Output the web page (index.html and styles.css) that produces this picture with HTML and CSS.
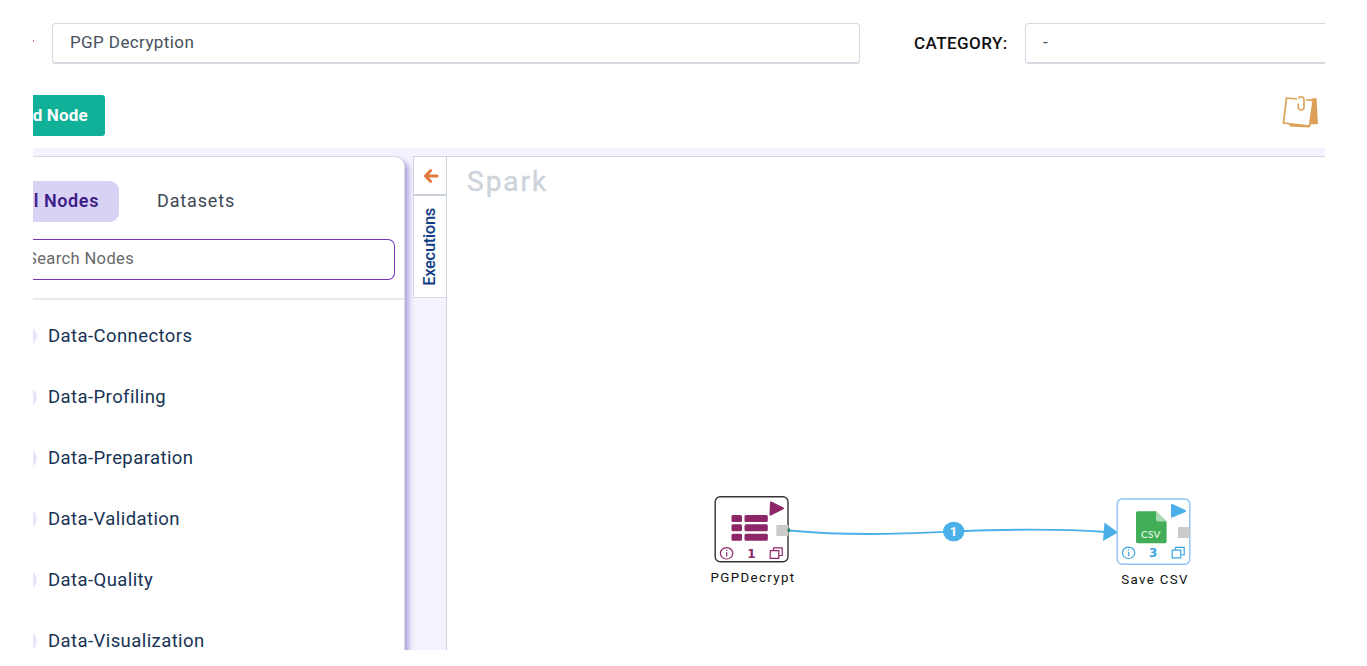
FILE: index.html
```html
<!DOCTYPE html>
<html lang="en">
<head>
<meta charset="utf-8">
<title>PGP Decryption</title>
<link rel="stylesheet" href="styles.css">
</head>
<body>
<div class="app">
  <header class="form-row">
    <span class="required"></span>
    <div class="field name-field">PGP Decryption</div>
    <span class="field-label">CATEGORY:</span>
    <div class="field category-field">-</div>
  </header>
  <div class="toolbar">
    <button class="add-node">d Node</button>
    <svg class="notes-icon" width="38" height="34" viewBox="0 0 38 34">
      <path d="M30.500 3.500L35.500 3L37 29L29.500 29.500ZM8.500 29L28 31L28.500 32.500L8.500 31.500Z" fill="#dda057"/>
      <path d="M5.500 3L32.300 5.500L28.500 31L2.500 28Z" fill="#fff" stroke="#dda057" stroke-width="1.700"/>
      <path d="M16 4.500H25" fill="none" stroke="#fff" stroke-width="4"/>
      <path d="M17.500 3.500Q18.500 1.500 21 2Q23 2.200 23 5V12Q23 15 20 15Q17.300 15 17.300 12V8.500" fill="none" stroke="#dda057" stroke-width="1.600"/>
    </svg>
  </div>
  <main class="workspace">
    <aside class="panel">
      <nav class="tabs">
        <span class="tab active">l Nodes</span>
        <span class="tab">Datasets</span>
      </nav>
      <div class="search"><span>Search Nodes</span></div>
      <ul class="groups">
        <li>Data-Connectors</li>
        <li>Data-Profiling</li>
        <li>Data-Preparation</li>
        <li>Data-Validation</li>
        <li>Data-Quality</li>
        <li>Data-Visualization</li>
      </ul>
    </aside>
    <div class="rail">
      <div class="collapse">
        <svg width="16" height="16" viewBox="0 0 16 16"><path d="M7.500 2.700L2.500 8L7.500 13.300M3 8H14" fill="none" stroke="#e07b3f" stroke-width="3" stroke-linecap="round" stroke-linejoin="round"/></svg>
      </div>
      <div class="executions"><span>Executions</span></div>
    </div>
    <section class="canvas">
      <h1>Spark</h1>
      <svg class="edges" width="878" height="493" viewBox="447 157 878 493">
        <path d="M789 530.500C850 536 895 534 954 531.500C1010 529 1055 528.500 1106 532" fill="none" stroke="#4bb0e8" stroke-width="1.900"/>
        <ellipse cx="953.700" cy="531.500" rx="10.700" ry="9.800" fill="#4bb0e8"/>
        <text x="953.500" y="536" class="edge-number">1</text>
        <path d="M1104.500 522.500L1118 532.500L1103 541Z" fill="#4bb0e8"/>
      </svg>
      <div class="node decrypt">
        <svg width="76" height="68" viewBox="714 496 76 68">
          <rect x="715.200" y="496.700" width="72.800" height="65" rx="5" fill="#fff" stroke="#3a3038" stroke-width="1.400"/>
          <g fill="#8d2767">
            <rect x="731.500" y="515" width="10.500" height="7" rx="1.500"/><rect x="744.500" y="515" width="23.300" height="7" rx="1.500"/>
            <rect x="731.500" y="524.300" width="10.500" height="7" rx="1.500"/><rect x="744.500" y="524.300" width="23.300" height="7" rx="1.500"/>
            <rect x="731.500" y="533.800" width="10.500" height="7" rx="1.500"/><rect x="744.500" y="533.800" width="23.300" height="7" rx="1.500"/>
            <path d="M771 502.500L783 508.300L770.500 514.500Z" stroke="#8d2767" stroke-width="2" stroke-linejoin="round"/>
          </g>
          <rect x="776.300" y="525" width="12" height="11" fill="#cbcbcb"/>
          <circle cx="789.400" cy="530.200" r="2" fill="#24856b"/>
          <g fill="none" stroke="#8d2767" stroke-width="1.200">
            <ellipse cx="726.600" cy="553.300" rx="6.200" ry="5.700"/><path d="M726.700 552.300V556.500M726.700 549.800V551.100"/>
            <path d="M773.500 550.500V547.900H782.200V555.500H779M770.200 550.600H778.800V558.400H770.200Z"/>
          </g>
          <text x="751.500" y="557.900" class="count plum">1</text>
        </svg>
        <span class="node-label">PGPDecrypt</span>
      </div>
      <div class="node csv">
        <svg width="76" height="68" viewBox="1116 498 76 68">
          <rect x="1117.200" y="499" width="72.600" height="65.300" rx="5" fill="#fff" stroke="#8fc2f5" stroke-width="1.400"/>
          <path d="M1137.500 511.300H1156L1166.600 521.500V541.500Q1166.600 543.200 1165 543.200H1137.500Q1136 543.200 1136 541.500V513Q1136 511.300 1137.500 511.300Z" fill="#42ae58"/>
          <path d="M1156 511.300L1166.600 521.500H1158Q1156 521.500 1156 519.500Z" fill="#a9dab2"/>
          <text x="1150.900" y="538.300" class="csv-text">CSV</text>
          <path d="M1172 505L1185 511L1172 516.500Z" fill="#4bb0e8" stroke="#4bb0e8" stroke-width="2" stroke-linejoin="round"/>
          <rect x="1178" y="527" width="11.700" height="11" fill="#cbcbcb"/>
          <g fill="none" stroke="#3aa5e0" stroke-width="1.200">
            <ellipse cx="1128.600" cy="552.800" rx="6.200" ry="5.700"/><path d="M1128.700 551.800V556M1128.700 549.300V550.600"/>
            <path d="M1175.500 550V547.400H1184.200V555H1181M1172.200 550.100H1180.800V557.900H1172.200Z"/>
          </g>
          <text x="1153.300" y="557.300" class="count blue">3</text>
        </svg>
        <span class="node-label">Save CSV</span>
      </div>
    </section>
  </main>
</div>
</body>
</html>
```
FILE: styles.css
```css
* { box-sizing: border-box; }
body { margin: 0; background: #fff; font-family: Roboto, "Liberation Sans", sans-serif; }
.app { width: 1292px; height: 650px; margin-left: 33px; overflow: hidden; display: flex; flex-direction: column; }
.form-row { display: flex; align-items: center; flex: none; padding-top: 23px; height: 64px; }
.required { flex: none; width: 1px; height: 2px; margin: 0 18px 6px 0; background: #e87878; }
.field { flex: none; height: 41px; border: 1px solid #d5dae1; border-bottom-width: 2px; border-radius: 4px; padding-left: 17px; font-size: 17px; letter-spacing: .4px; line-height: 37px; color: #45505e; }
.name-field { width: 808px; }
.field-label { flex: none; width: 111px; margin-left: 54px; padding-bottom: 2px; font-size: 17px; letter-spacing: .45px; font-weight: 500; color: #111; white-space: nowrap; }
.category-field { width: 330px; }
.toolbar { display: flex; flex: none; justify-content: space-between; height: 84px; padding: 31px 6px 0 0; }
.add-node { width: 72px; height: 41px; padding: 0 17px 2px 0; border: 0; border-radius: 0 3px 3px 0; background: #11b199; color: #fff; font: 700 17px Roboto, sans-serif; letter-spacing: .2px; text-align: right; white-space: nowrap; direction: rtl; }
.notes-icon { display: block; }
.workspace { display: flex; flex: 1; min-height: 0; padding-top: 8px; background: #f4f2fe; }
.panel { flex: none; width: 372px; margin-right: 8px; background: #fff; border: 1px solid #d3dbe3; border-width: 1px 1px 0 0; border-radius: 0 10px 0 0; box-shadow: 4px 4px 5px #b1a9df; }
.tabs { display: flex; height: 65px; padding-top: 24px; gap: 38px; }
.tab { height: 41px; line-height: 40px; font-size: 18px; letter-spacing: .85px; color: #3e4853; }
.tab.active { width: 86px; padding-right: 20px; border-radius: 0 9px 9px 0; background: #d8d2f5; color: #3f1d87; font-weight: 600; display: flex; justify-content: flex-end; white-space: nowrap; letter-spacing: .6px; }
.search { width: 362px; height: 41px; margin-top: 17px; border: 1px solid #7a35b9; border-left: 0; border-radius: 0 7px 7px 0; font-size: 16.500px; line-height: 38px; color: #696969; letter-spacing: .38px; overflow: hidden; }
.search span { margin-left: -6px; }
.groups { list-style: none; margin: 18px 0 0; padding: 5px 0 0; border-top: 2px solid #e9eaee; }
.groups li { height: 61px; display: flex; align-items: center; font-size: 18.500px; letter-spacing: .42px; color: #183354; }
.groups li::before { content: ""; flex: none; width: 20px; height: 20px; border-radius: 50%; margin: 0 11px 0 -16px; background: #e9e5fd; }
.rail { width: 34px; flex: none; }
.collapse { display: flex; justify-content: center; align-items: center; height: 40px; background: #fff; border: 1px solid #cdd3da; border-width: 1px 0 2px 1px; }
.executions { display: flex; align-items: center; justify-content: center; height: 102px; background: #fff; border: 1px solid #d5dae2; border-top: 0; border-right: 0; }
.executions span { writing-mode: vertical-rl; transform: rotate(180deg); margin-right: 2px; font-size: 16.500px; letter-spacing: -.3px; font-weight: 500; color: #123e87; }
.canvas { position: relative; flex: 1; border: 1px solid #cdd3da; border-top-width: 1px; border-right: 0; border-bottom: 0; margin-left: -1px; background: #fff; }
.canvas h1 { margin: 7px 0 0 20px; font-size: 28px; font-weight: 400; line-height: 36px; letter-spacing: 2px; color: #cdd3da; -webkit-text-stroke: .4px #cdd3da; }
.edges { position: absolute; left: 0; top: 0; }
.edge-number { font: 700 13px Roboto, sans-serif; fill: #fff; text-anchor: middle; }
.node { position: absolute; width: 76px; display: flex; flex-direction: column; align-items: center; }
.decrypt { left: 267px; top: 339px; }
.csv { left: 669px; top: 341px; }
.node svg { flex: none; }
.node-label { margin: 6px 0 0 2px; font-size: 13.300px; line-height: 16px; letter-spacing: 1.350px; color: #111; white-space: nowrap; }
.count { font: 700 12px "DejaVu Sans", sans-serif; text-anchor: middle; }
.plum { fill: #8d2767; }
.blue { fill: #3aa5e0; }
.csv-text { font: 500 10px Lato, sans-serif; fill: #e4fae6; text-anchor: middle; letter-spacing: .3px; }
```
